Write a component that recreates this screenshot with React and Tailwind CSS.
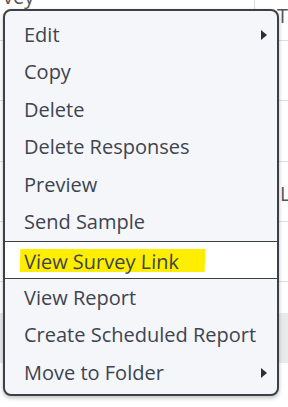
const items = [
  { label: "Edit", sub: true },
  { label: "Copy" },
  { label: "Delete" },
  { label: "Delete Responses" },
  { label: "Preview" },
  { label: "Send Sample" },
];

const lower = [
  { label: "View Report" },
  { label: "Create Scheduled Report" },
  { label: "Move to Folder", sub: true },
];

function Caret() {
  return (
    <svg width="6" height="10" viewBox="0 0 6 10" className="shrink-0">
      <path d="M0 0 L6 5 L0 10 Z" fill="#2b3038" />
    </svg>
  );
}

function Item({ label, sub }) {
  return (
    <div className="flex items-center justify-between h-[37.5px] pl-[19px] pr-[10px]">
      <span>{label}</span>
      {sub && <Caret />}
    </div>
  );
}

function Row({ h, children, className = "" }) {
  return (
    <div className={`flex justify-between border-b border-[#dedede] ${h} ${className}`}>
      {children}
    </div>
  );
}

export default function App() {
  return (
    <div
      className="relative w-[288px] h-[407px] overflow-hidden bg-white text-[#3d4450]"
      style={{ fontFamily: '"Open Sans", sans-serif' }}
    >
      {/* table behind the menu */}
      <div className="flex flex-col text-[20px] text-[#555] leading-none">
        <Row h="h-[41px]">
          <span className="-mt-[13px] ml-[3px]">vey</span>
          <div className="flex">
            <div className="w-px h-[10px] bg-[#d9d9d9]" />
            <span className="ml-[22px] mt-[6px]">T</span>
          </div>
        </Row>
        <Row h="h-[60px]" />
        <Row h="h-[61px]" />
        <Row h="h-[60px]">
          <span />
          <span className="mt-[22px] -mr-[10px] w-[18px] overflow-hidden">Lo</span>
        </Row>
        <Row h="h-[60px]" />
        <div className="h-[31px]" />
        <div className="h-[50px] bg-[#e9eaec]" />
      </div>

      {/* context menu */}
      <div className="absolute left-[3px] top-[9px] w-[276px] rounded-[8px] border-2 border-[#3b4048] bg-[#f5f6fa] shadow-[0_2px_4px_rgba(0,0,0,0.25)] overflow-hidden text-[20px] leading-none">
        <div className="pt-[5px]">
          {items.map((it) => (
            <Item key={it.label} {...it} />
          ))}
        </div>
        <div className="border-y border-[#3b4048] bg-white h-[38px] flex items-center pl-[15px]">
          <span className="bg-[#ffee00] pl-[4px] pr-[26px] pt-[3px] pb-0 -skew-x-2">View Survey Link</span>
        </div>
        <div className="pb-[2px]">
          {lower.map((it) => (
            <Item key={it.label} {...it} />
          ))}
        </div>
      </div>
    </div>
  );
}
